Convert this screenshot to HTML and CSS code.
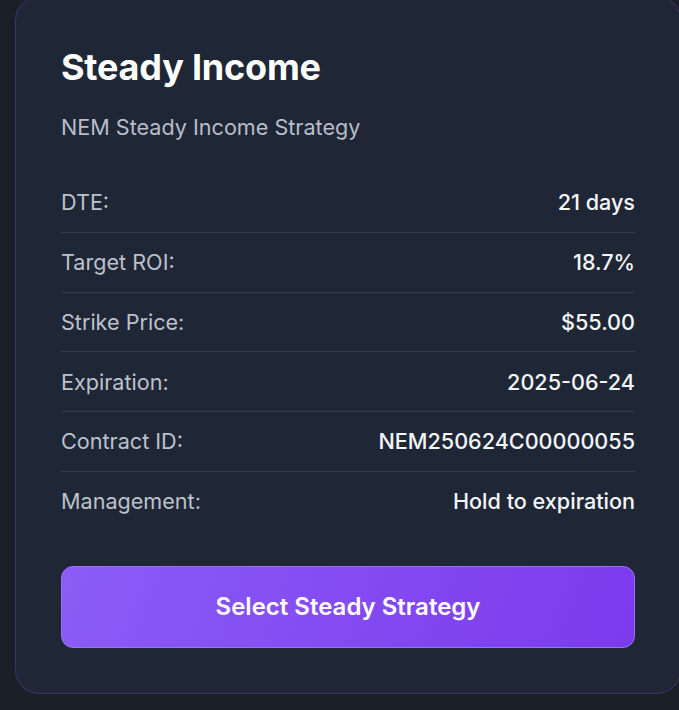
FILE: index.html
```html
<!DOCTYPE html>
<html lang="en">
<head>
<meta charset="utf-8">
<title>Steady Income</title>
<link rel="stylesheet" href="styles.css">
</head>
<body>
<div class="page">
  <section class="card">
    <h2 class="title">Steady Income</h2>
    <p class="subtitle">NEM Steady Income Strategy</p>
    <dl class="details">
      <div class="row"><dt>DTE:</dt><dd>21 days</dd></div>
      <div class="row"><dt>Target ROI:</dt><dd>18.7%</dd></div>
      <div class="row"><dt>Strike Price:</dt><dd>$55.00</dd></div>
      <div class="row"><dt>Expiration:</dt><dd>2025-06-24</dd></div>
      <div class="row"><dt>Contract ID:</dt><dd>NEM250624C00000055</dd></div>
      <div class="row"><dt>Management:</dt><dd>Hold to expiration</dd></div>
    </dl>
    <button class="select-btn" type="button">Select Steady Strategy</button>
  </section>
</div>
</body>
</html>
```
FILE: styles.css
```css
html, body {
  margin: 0;
  padding: 0;
  background: #1b1f28;
  font-family: Inter, "Noto Sans", sans-serif;
  overflow: hidden;
}

.page {
  padding-left: 15px;
  margin-top: -4px;
}

.card {
  box-sizing: border-box;
  width: 666px;
  background: #1f2737;
  border: 1px solid #3b3468;
  border-radius: 24px;
  padding: 45px;
}

.title {
  margin: 1px 0 0;
  font-size: 36px;
  line-height: 48px;
  font-weight: 700;
  color: #ffffff;
  letter-spacing: -0.2px;
}

.subtitle {
  margin: 20px 0 30px;
  font-size: 21.6px;
  line-height: 32px;
  color: #b8bdc6;
}

.details {
  margin: 0;
}

.row {
  display: flex;
  justify-content: space-between;
  align-items: center;
  padding: 13.2px 0;
  line-height: 32.4px;
  font-size: 21.6px;
  border-bottom: 1px solid #363e4e;
}

.row:last-child {
  border-bottom: none;
}

.row dt {
  color: #bcc1ca;
}

.row dd {
  margin: 0;
  color: #f5f6f8;
  font-weight: 500;
}

.select-btn {
  display: block;
  box-sizing: border-box;
  width: 100%;
  margin-top: 35px;
  height: 82px;
  border: 1px solid #9a72f7;
  border-radius: 12px;
  background: linear-gradient(110deg, #8b5cf6 0%, #7c3aed 100%);
  color: #ffffff;
  font-family: Inter, "Noto Sans", sans-serif;
  font-size: 24px;
  font-weight: 600;
  cursor: pointer;
}
```
